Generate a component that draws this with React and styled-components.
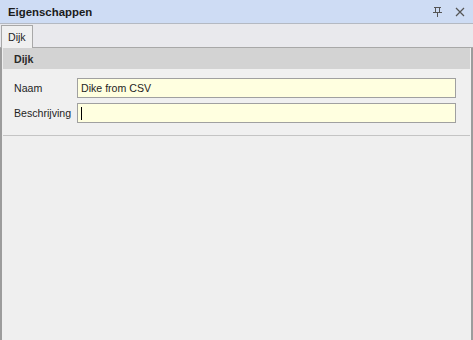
import React from "react";
import styled, { createGlobalStyle } from "styled-components";

const Global = createGlobalStyle`
  html, body { margin: 0; padding: 0; background: #efefef; }
  body { font-family: "Liberation Sans", Arial, sans-serif; }
`;

const Window = styled.div`
  width: 473px;
  height: 340px;
  display: flex;
  flex-direction: column;
  background: #efefef;
  overflow: hidden;
  box-sizing: border-box;
`;

const TitleBar = styled.div`
  height: 23px;
  flex: none;
  display: flex;
  align-items: center;
  justify-content: space-between;
  padding: 0 8px 0 8px;
  background: #cedcf4;
  border-bottom: 1px solid #b4b9c2;
`;

const Title = styled.span`
  font-size: 11.4px;
  font-weight: bold;
  color: #1b1b1b;
`;

const TitleIcons = styled.div`
  display: flex;
  align-items: center;
  gap: 13px;
`;

const TabStrip = styled.div`
  height: 23px;
  flex: none;
  display: flex;
  align-items: flex-end;
  padding-left: 1px;
  background: #e9e9ed;
  border-bottom: 1px solid #a8a8a8;
`;

const Tab = styled.div`
  height: 23px;
  box-sizing: border-box;
  margin-bottom: -1px;
  padding: 5px 6px 0 6px;
  font-size: 10.6px;
  color: #1e1e1e;
  background: #f0f0f0;
  border: 1px solid #a8a8a8;
  border-bottom: none;
`;

const Content = styled.div`
  flex: 1;
  display: flex;
  flex-direction: column;
  border-left: 2px solid #9c9c9c;
  border-right: 2px solid #9c9c9c;
  padding: 0 1px 0 1px;
  background: #efefef;
`;

const GroupHeader = styled.div`
  height: 21px;
  display: flex;
  align-items: center;
  padding-left: 11px;
  background: #d3d3d3;
  font-size: 10.6px;
  font-weight: bold;
  color: #2a2a2a;
`;

const Form = styled.div`
  display: grid;
  grid-template-columns: 63px 379px;
  row-gap: 5px;
  align-items: center;
  padding: 9px 0 12px 11px;
  background: #f0f0f0;
  border-bottom: 1px solid #c4c4c4;
`;

const Label = styled.span`
  font-size: 10.6px;
  color: #1e1e1e;
`;

const Field = styled.div`
  height: 20px;
  box-sizing: border-box;
  display: flex;
  align-items: center;
  padding-left: 3px;
  background: #ffffe0;
  border: 1px solid #a0a0a0;
  font-size: 10.6px;
  color: #1e1e1e;
`;

const Caret = styled.span`
  width: 1px;
  height: 13px;
  background: #000;
`;

const PinIcon = () => (
  <svg width="9" height="10" viewBox="0 0 9 10" fill="none" stroke="#555" strokeWidth="1" shapeRendering="crispEdges">
    <path d="M1 0.5 H8" />
    <path d="M2.5 1 V5 M6.5 1 V5" />
    <path d="M0 5.5 H9" />
    <path d="M4.5 6 V10" />
  </svg>
);

const CloseIcon = () => (
  <svg width="10" height="10" viewBox="0 0 10 10" stroke="#555" strokeWidth="1.2">
    <path d="M1 1 L9 9 M9 1 L1 9" />
  </svg>
);

export default function App() {
  return (
    <>
      <Global />
      <Window>
        <TitleBar>
          <Title>Eigenschappen</Title>
          <TitleIcons>
            <PinIcon />
            <CloseIcon />
          </TitleIcons>
        </TitleBar>
        <TabStrip>
          <Tab>Dijk</Tab>
        </TabStrip>
        <Content>
          <GroupHeader>Dijk</GroupHeader>
          <Form>
            <Label>Naam</Label>
            <Field>Dike from CSV</Field>
            <Label>Beschrijving</Label>
            <Field>
              <Caret />
            </Field>
          </Form>
        </Content>
      </Window>
    </>
  );
}
